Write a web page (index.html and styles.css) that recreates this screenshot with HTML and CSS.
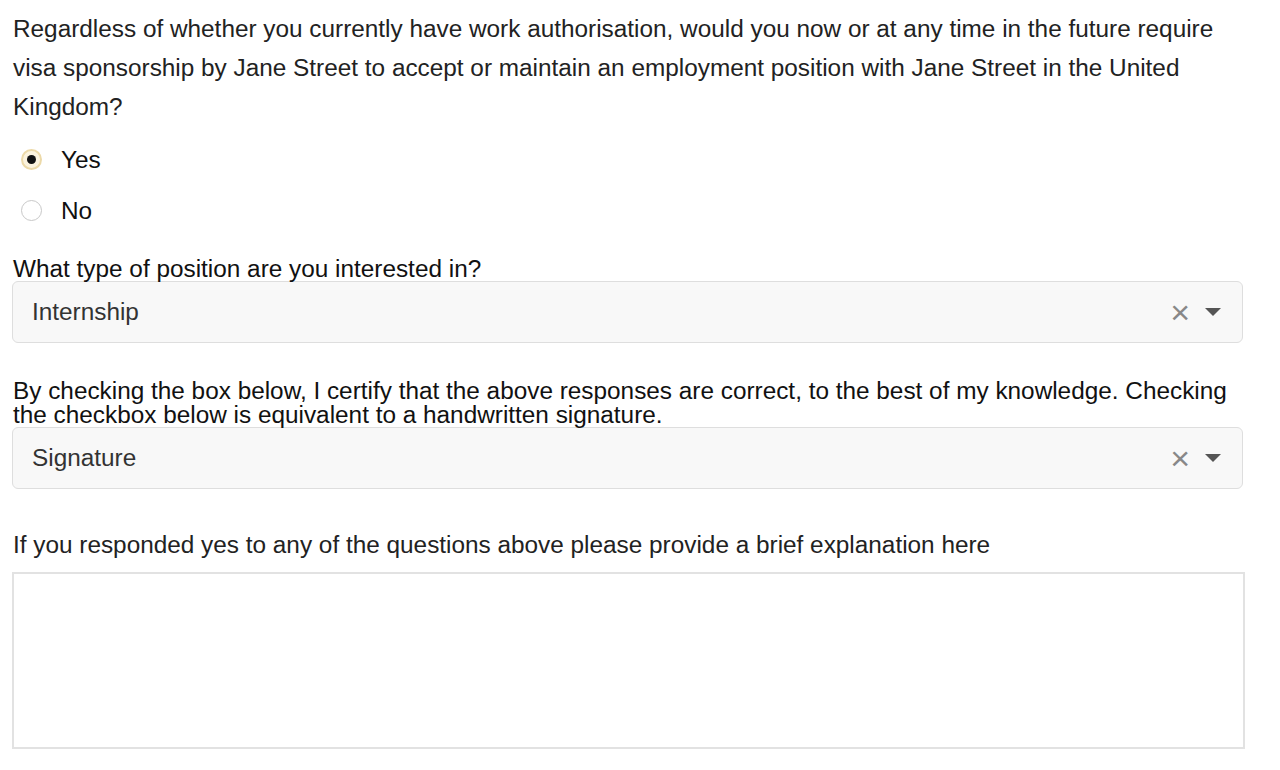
FILE: index.html
```html
<!DOCTYPE html>
<html lang="en">
<head>
    <meta charset="UTF-8">
    <meta name="viewport" content="width=device-width, initial-scale=1.0">
    <title>Application questions</title>
    <link rel="stylesheet" href="styles.css">
</head>
<body>
    <div class="form">
        <div class="question">
            <p class="question-text">Regardless of whether you currently have work authorisation, would you now or at any time in the future require visa sponsorship by Jane Street to accept or maintain an employment position with Jane Street in the United Kingdom?</p>
            <div class="radio-row">
                <span class="radio checked"></span>
                <span class="radio-label">Yes</span>
            </div>
            <div class="radio-row">
                <span class="radio"></span>
                <span class="radio-label">No</span>
            </div>
        </div>

        <div class="field">
            <label class="field-label">What type of position are you interested in?</label>
            <div class="select">
                <span class="select-value">Internship</span>
                <span class="select-clear">&times;</span>
                <span class="select-arrow"></span>
            </div>
        </div>

        <div class="field">
            <label class="field-label">By checking the box below, I certify that the above responses are correct, to the best of my knowledge. Checking the checkbox below is equivalent to a handwritten signature.</label>
            <div class="select">
                <span class="select-value">Signature</span>
                <span class="select-clear">&times;</span>
                <span class="select-arrow"></span>
            </div>
        </div>

        <div class="field">
            <p class="plain-label">If you responded yes to any of the questions above please provide a brief explanation here</p>
            <div class="textarea"></div>
        </div>
    </div>
</body>
</html>
```
FILE: styles.css
```css
body {
    font-family: "Liberation Sans", Arial, sans-serif;
    font-size: 24.35px;
    color: #222;
    background-color: #fff;
    margin: 0;
    padding: 0;
}
.form {
    padding: 9px 36px 0 12px;
}
.question-text {
    margin: 0 0 0 1px;
    line-height: 39px;
}
.radio-row {
    display: flex;
    align-items: center;
    height: 51px;
    margin-left: 1px;
}
.radio-row:first-of-type {
    margin-top: 8px;
}
.radio {
    width: 21px;
    height: 21px;
    box-sizing: border-box;
    border-radius: 50%;
    border: 1px solid #c8c8c8;
    background-color: #fff;
    margin-left: 8px;
    margin-right: 19px;
    display: flex;
    align-items: center;
    justify-content: center;
}
.radio.checked {
    border: 2px solid #ecd9a8;
    background-color: #fbf3de;
}
.radio.checked::after {
    content: "";
    width: 9px;
    height: 9px;
    border-radius: 50%;
    background-color: #111;
}
.radio-label {
    color: #111;
}
.field {
    margin-top: 21px;
}
.field-label {
    display: block;
    color: #111;
    line-height: 24px;
    margin-left: 1px;
}
.select {
    margin-top: 0;
    height: 62px;
    box-sizing: border-box;
    border: 1px solid #dedede;
    border-radius: 6px;
    background-color: #f8f8f8;
    display: flex;
    align-items: center;
    padding: 0 21px 0 19px;
    width: 1231px;
}
.select-value {
    flex-grow: 1;
    color: #333;
}
.select-clear {
    color: #888;
    font-size: 34px;
    line-height: 1;
    margin-right: 15px;
}
.select-arrow {
    width: 0;
    height: 0;
    border-left: 8px solid transparent;
    border-right: 8px solid transparent;
    border-top: 8px solid #555;
}
.field + .field {
    margin-top: 36px;
}
.plain-label {
    margin: 0 0 0 1px;
    line-height: 39px;
    color: #222;
}
.textarea {
    margin-top: 8px;
    width: 1233px;
    height: 177px;
    box-sizing: border-box;
    border: 2px solid #e2e2e2;
    background-color: #fff;
}
```
